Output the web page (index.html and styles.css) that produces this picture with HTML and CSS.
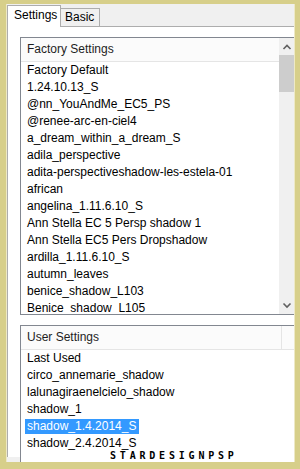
FILE: index.html
```html
<!DOCTYPE html>
<html>
<head>
<meta charset="utf-8">
<link rel="stylesheet" href="styles.css">
</head>
<body>
<div class="window">
  <div class="tabstrip">
    <div class="tab tab-active">Settings</div>
    <div class="tab">Basic</div>
  </div>
  <div class="panel">
    <div class="listbox listbox-factory">
      <div class="list-content">
        <div class="list-header"><span class="header-label">Factory Settings</span></div>
        <div class="item">Factory Default</div>
        <div class="item">1.24.10.13_S</div>
        <div class="item">@nn_YouAndMe_EC5_PS</div>
        <div class="item">@renee-arc-en-ciel4</div>
        <div class="item">a_dream_within_a_dream_S</div>
        <div class="item">adila_perspective</div>
        <div class="item">adita-perspectiveshadow-les-estela-01</div>
        <div class="item">african</div>
        <div class="item">angelina_1.11.6.10_S</div>
        <div class="item">Ann Stella EC 5 Persp shadow 1</div>
        <div class="item">Ann Stella EC5 Pers Dropshadow</div>
        <div class="item">ardilla_1.11.6.10_S</div>
        <div class="item">autumn_leaves</div>
        <div class="item">benice_shadow_L103</div>
        <div class="item">Benice_shadow_L105</div>
      </div>
      <div class="scrollbar">
        <div class="sb-btn"><svg width="16" height="17" viewBox="0 0 16 17"><polyline points="4.5,11 8,7.5 11.5,11" fill="none" stroke="#606060" stroke-width="1.6"/></svg></div>
        <div class="sb-thumb"></div>
        <div class="sb-track"></div>
        <div class="sb-btn"><svg width="16" height="17" viewBox="0 0 16 17"><polyline points="4.5,6.5 8,10 11.5,6.5" fill="none" stroke="#606060" stroke-width="1.6"/></svg></div>
      </div>
    </div>
    <div class="listbox listbox-user">
      <div class="list-content">
        <div class="list-header list-header-user"><span class="header-label header-cell">User Settings</span><span class="header-rest"></span></div>
        <div class="item">Last Used</div>
        <div class="item">circo_annemarie_shadow</div>
        <div class="item">lalunagiraenelcielo_shadow</div>
        <div class="item">shadow_1</div>
        <div class="item"><span class="selected">shadow_1.4.2014_S</span></div>
        <div class="item">shadow_2.4.2014_S</div>
      </div>
    </div>
  </div>
  <div class="watermark">STARDESIGNPSP</div>
</div>
</body>
</html>
```

FILE: styles.css
```css
html, body {
  margin: 0;
  padding: 0;
}
body {
  width: 300px;
  height: 469px;
  overflow: hidden;
  background: #d7cf8a;
  font-family: "Liberation Sans", Arial, sans-serif;
  font-size: 12px;
  color: #000;
}
.window {
  position: relative;
  margin: 4px 5px 0 6px;
  height: 458px;
  background: #f0f0f0;
  border-left: 1px solid #eee9c6;
  border-right: 1px solid #eee9c6;
  overflow: hidden;
}
.tabstrip {
  display: flex;
  align-items: flex-end;
  height: 22px;
}
.tab {
  box-sizing: border-box;
  height: 18px;
  width: 39px;
  border: 1px solid #adadad;
  border-left: none;
  border-bottom: none;
  background: #f0f0f0;
  font-size: 12px;
  line-height: 17px;
  padding-left: 4px;
  color: #000;
}
.tab-active {
  position: relative;
  z-index: 2;
  width: 54px;
  height: 22px;
  margin-bottom: -1px;
  border-left: 1px solid #adadad;
  background: #fff;
  line-height: 19px;
  padding-left: 6px;
}
.panel {
  background: #fff;
  border-top: 1px solid #adadad;
  border-left: 1px solid #adadad;
  padding: 10px 0 0 12px;
  height: 420px;
}
.listbox {
  display: flex;
  border: 1px solid #828790;
  margin-right: -2px;
  background: #fff;
  overflow: hidden;
}
.listbox-factory {
  height: 276px;
}
.listbox-user {
  margin-top: 10px;
  height: 200px;
}
.list-content {
  flex: 1;
  min-width: 0;
  overflow: hidden;
}
.list-header {
  display: flex;
  height: 23px;
  border-bottom: 1px solid #e5e5e5;
  background: #fbfbfb;
  line-height: 23px;
  color: #1e1e1e;
}
.header-label {
  padding-left: 6px;
}
.header-cell {
  flex: 1;
  border-right: 1px solid #e5e5e5;
}
.header-rest {
  width: 13px;
}
.item {
  height: 17px;
  line-height: 17px;
  padding-left: 6px;
  white-space: nowrap;
}
.selected {
  display: inline-block;
  line-height: 15px;
  background: #3399ff;
  color: #fff;
  padding: 0 3px 0 2px;
  margin-left: -2px;
}
.scrollbar {
  width: 16px;
  display: flex;
  flex-direction: column;
  background: #f0f0f0;
}
.sb-btn {
  height: 17px;
}
.sb-btn svg {
  display: block;
}
.sb-thumb {
  height: 37px;
  background: #cdcdcd;
}
.sb-track {
  flex: 1;
}
.watermark {
  position: absolute;
  left: 103px;
  top: 447px;
  font-family: "DejaVu Sans Mono", monospace;
  font-size: 10px;
  font-weight: bold;
  line-height: 10px;
  letter-spacing: 3.8px;
  color: #000;
}
```
